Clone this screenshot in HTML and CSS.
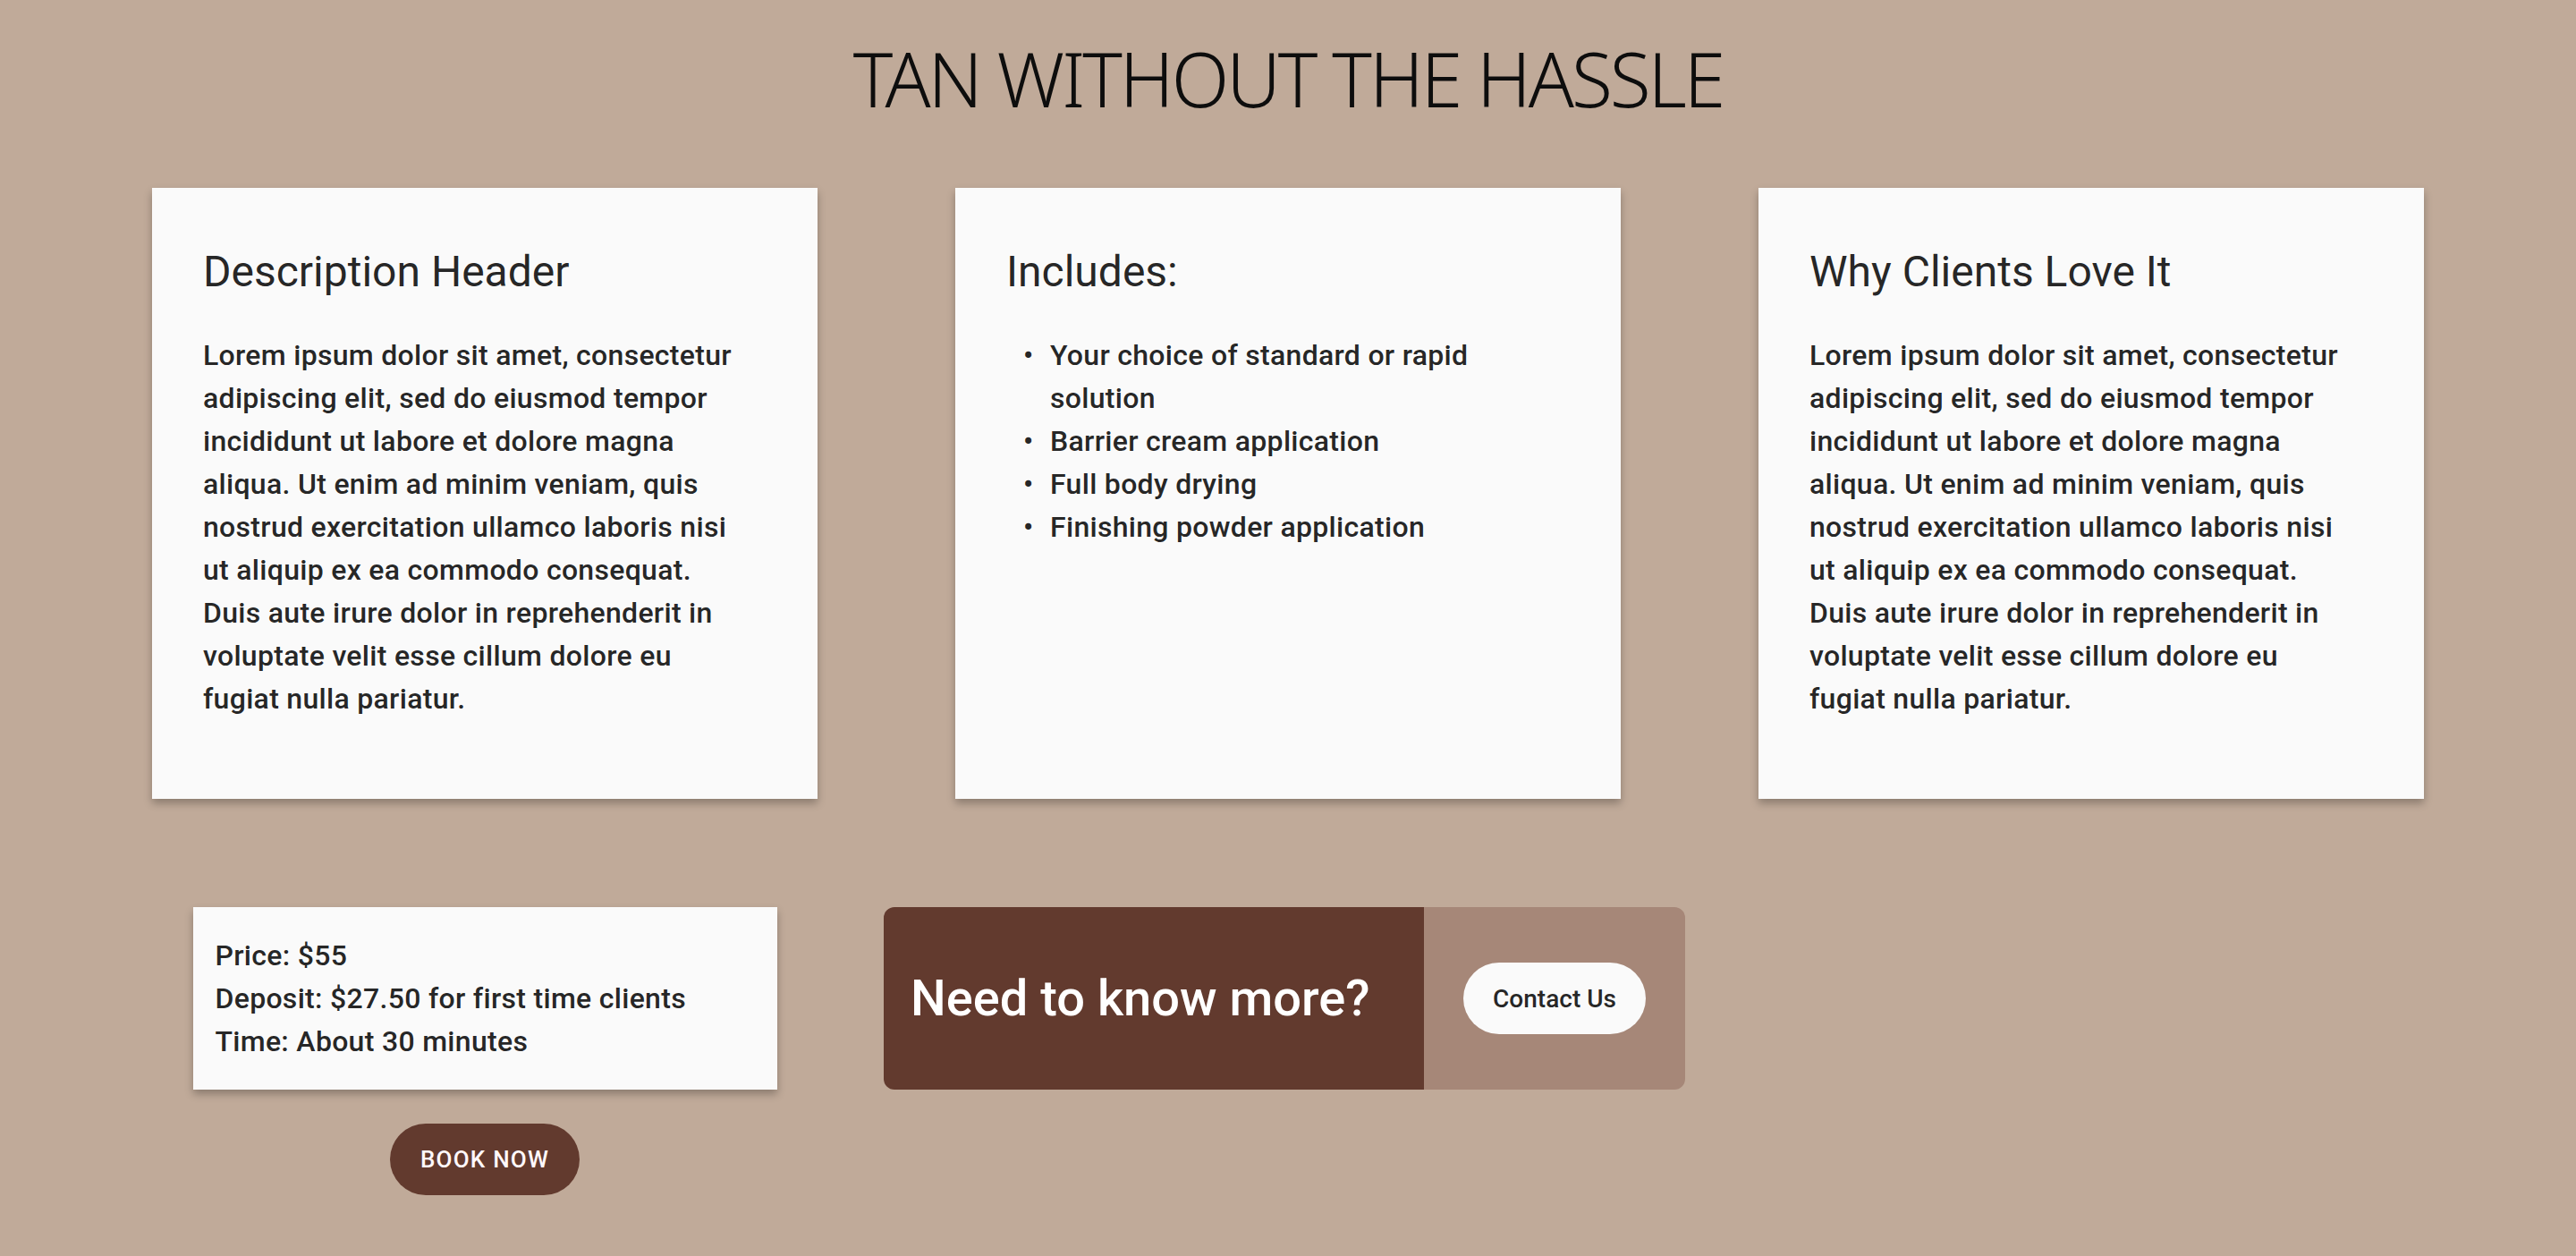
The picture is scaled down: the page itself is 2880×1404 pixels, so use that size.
FILE: index.html
```html
<!DOCTYPE html>
<html lang="en">
<head>
<meta charset="utf-8">
<title>Tan Without The Hassle</title>
<link rel="stylesheet" href="styles.css">
</head>
<body>
<main class="page">
  <h1 class="title">TAN WITHOUT THE HASSLE</h1>

  <section class="cards">
    <article class="card">
      <h2 class="card-title">Description Header</h2>
      <p class="card-text">Lorem ipsum dolor sit amet, consectetur adipiscing elit, sed do eiusmod tempor incididunt ut labore et dolore magna aliqua. Ut enim ad minim veniam, quis nostrud exercitation ullamco laboris nisi ut aliquip ex ea commodo consequat. Duis aute irure dolor in reprehenderit in voluptate velit esse cillum dolore eu fugiat nulla pariatur.</p>
    </article>
    <article class="card">
      <h2 class="card-title">Includes:</h2>
      <ul class="card-list">
        <li>Your choice of standard or rapid solution</li>
        <li>Barrier cream application</li>
        <li>Full body drying</li>
        <li>Finishing powder application</li>
      </ul>
    </article>
    <article class="card">
      <h2 class="card-title">Why Clients Love It</h2>
      <p class="card-text">Lorem ipsum dolor sit amet, consectetur adipiscing elit, sed do eiusmod tempor incididunt ut labore et dolore magna aliqua. Ut enim ad minim veniam, quis nostrud exercitation ullamco laboris nisi ut aliquip ex ea commodo consequat. Duis aute irure dolor in reprehenderit in voluptate velit esse cillum dolore eu fugiat nulla pariatur.</p>
    </article>
  </section>

  <section class="bottom">
    <div class="price-col">
      <div class="price-box">
        <div class="price-line">Price: $55</div>
        <div class="price-line">Deposit: $27.50 for first time clients</div>
        <div class="price-line">Time: About 30 minutes</div>
      </div>
      <button class="book-btn" type="button">Book Now</button>
    </div>
    <div class="contact">
      <div class="contact-text">Need to know more?</div>
      <div class="contact-action">
        <button class="contact-btn" type="button">Contact Us</button>
      </div>
    </div>
  </section>
</main>
</body>
</html>
```
FILE: styles.css
```css
html {
  background: #c0aa99;
}

body {
  margin: 0;
  background: #c0aa99;
  font-family: Roboto, "Noto Sans", sans-serif;
  color: rgba(0, 0, 0, 0.87);
}

.page {
  padding: 46px 170px 0;
}

.title {
  margin: 0;
  text-align: center;
  font-family: "Noto Sans", sans-serif;
  font-weight: 300;
  font-size: 84px;
  line-height: 84px;
  color: #0d0d0d;
  letter-spacing: -3px;
}

.cards {
  display: grid;
  grid-template-columns: repeat(3, 744px);
  column-gap: 154px;
  margin-top: 80px;
}

.card {
  background: #fafafa;
  padding: 62px 87px 88px 57px;
  box-shadow: 0 5px 9px rgba(0, 0, 0, 0.28);
}

.card-title {
  margin: 0 0 37px;
  font-size: 48px;
  line-height: 64px;
  font-weight: 400;
}

.card-text {
  margin: 0;
  font-size: 32px;
  line-height: 48px;
  font-weight: 500;
  letter-spacing: 0.3px;
}

.card-list {
  margin: 0;
  padding: 0 0 0 19px;
  list-style: none;
  font-size: 32px;
  line-height: 48px;
  font-weight: 500;
  letter-spacing: 0.3px;
}

.card-list li {
  display: flex;
}

.card-list li::before {
  content: "•";
  flex: 0 0 30px;
}

.bottom {
  display: grid;
  grid-template-columns: repeat(3, 744px);
  column-gap: 154px;
  margin-top: 121px;
  align-items: start;
  justify-items: center;
}

.price-col {
  display: flex;
  flex-direction: column;
  align-items: center;
  gap: 38px;
}

.price-box {
  box-sizing: border-box;
  width: 653px;
  padding: 30px 25px;
  background: #fafafa;
  box-shadow: 0 5px 9px rgba(0, 0, 0, 0.28);
  font-size: 32px;
  line-height: 48px;
  font-weight: 500;
  letter-spacing: 0.3px;
}

.book-btn {
  width: 212px;
  height: 80px;
  border: 0;
  border-radius: 40px;
  background: #623a2e;
  color: #fff8fb;
  font-family: Roboto, sans-serif;
  font-size: 26px;
  font-weight: 500;
  letter-spacing: 1.2px;
  text-transform: uppercase;
  padding: 0;
}

.contact {
  display: flex;
  height: 204px;
  border-radius: 12px;
  overflow: hidden;
  margin-right: 8px;
}

.contact-text {
  box-sizing: border-box;
  width: 604px;
  padding-left: 30px;
  display: flex;
  align-items: center;
  background: #623a2e;
  color: #ffffff;
  font-size: 56px;
  font-weight: 500;
}

.contact-action {
  width: 292px;
  display: flex;
  align-items: center;
  justify-content: center;
  background: #a68778;
}

.contact-btn {
  width: 204px;
  height: 80px;
  border: 0;
  border-radius: 40px;
  background: #fafafa;
  color: rgba(0, 0, 0, 0.87);
  font-family: Roboto, sans-serif;
  font-size: 28px;
  font-weight: 500;
  padding: 0;
}
```
